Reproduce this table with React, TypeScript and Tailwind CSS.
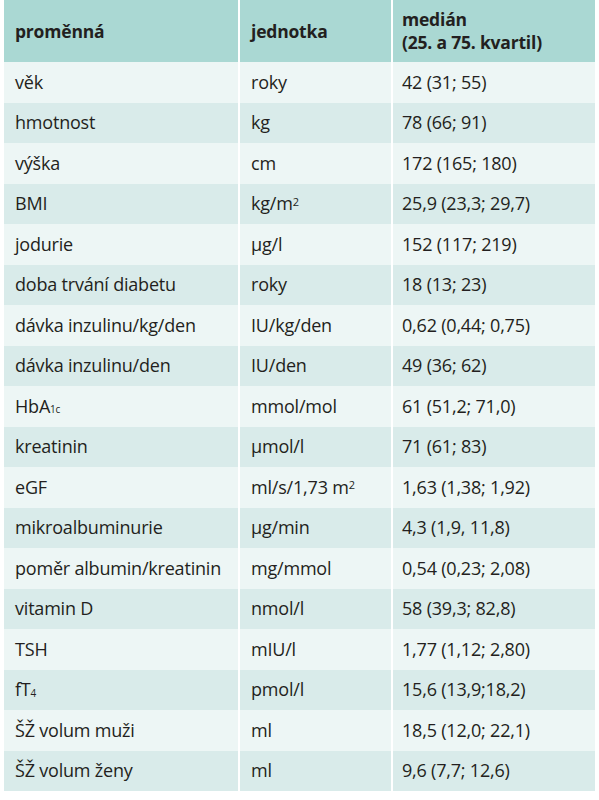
import type { ReactNode } from 'react';

type Row = { name: ReactNode; unit: ReactNode; value: string };

const rows: Row[] = [
  { name: 'věk', unit: 'roky', value: '42 (31; 55)' },
  { name: 'hmotnost', unit: 'kg', value: '78 (66; 91)' },
  { name: 'výška', unit: 'cm', value: '172 (165; 180)' },
  { name: 'BMI', unit: <>kg/m<sup className="text-[11px] relative -top-[2px]">2</sup></>, value: '25,9 (23,3; 29,7)' },
  { name: 'jodurie', unit: 'μg/l', value: '152 (117; 219)' },
  { name: 'doba trvání diabetu', unit: 'roky', value: '18 (13; 23)' },
  { name: 'dávka inzulinu/kg/den', unit: 'IU/kg/den', value: '0,62 (0,44; 0,75)' },
  { name: 'dávka inzulinu/den', unit: 'IU/den', value: '49 (36; 62)' },
  { name: <>HbA<sub className="text-[10px] relative top-[3px]">1c</sub></>, unit: 'mmol/mol', value: '61 (51,2; 71,0)' },
  { name: 'kreatinin', unit: 'μmol/l', value: '71 (61; 83)' },
  { name: 'eGF', unit: <>ml/s/1,73 m<sup className="text-[11px] relative -top-[2px]">2</sup></>, value: '1,63 (1,38; 1,92)' },
  { name: 'mikroalbuminurie', unit: 'μg/min', value: '4,3 (1,9, 11,8)' },
  { name: 'poměr albumin/kreatinin', unit: 'mg/mmol', value: '0,54 (0,23; 2,08)' },
  { name: 'vitamin D', unit: 'nmol/l', value: '58 (39,3; 82,8)' },
  { name: 'TSH', unit: 'mIU/l', value: '1,77 (1,12; 2,80)' },
  { name: <>fT<sub className="text-[10px] relative top-[3px]">4</sub></>, unit: 'pmol/l', value: '15,6 (13,9;18,2)' },
  { name: 'ŠŽ volum muži', unit: 'ml', value: '18,5 (12,0; 22,1)' },
  { name: 'ŠŽ volum ženy', unit: 'ml', value: '9,6 (7,7; 12,6)' },
];

const App = () => {
  return (
    <div className="w-[599px] h-[800px] bg-white pl-[4px] text-[#231f20]" style={{ fontFamily: '"Open Sans", "Noto Sans", sans-serif' }}>
      <div className="w-[591px] flex flex-col">
        <div className="grid grid-cols-[234px_151px_202px] gap-x-[2px] h-[62px] text-[17.5px] font-bold tracking-[-0.2px]">
          <div className="bg-[#aad8d3] flex items-center pl-[11px]">proměnná</div>
          <div className="bg-[#aad8d3] flex items-center pl-[11px]">jednotka</div>
          <div className="bg-[#aad8d3] flex flex-col justify-center pl-[9px] leading-[23px]">
            <span>medián</span>
            <span>(25. a 75. kvartil)</span>
          </div>
        </div>
        {rows.map((row, i) => {
          const bg = i % 2 === 0 ? 'bg-[#edf6f5]' : 'bg-[#d9ebea]';
          return (
            <div key={i} className="grid grid-cols-[234px_151px_202px] gap-x-[2px] h-[40.5px] text-[18px] tracking-[-0.2px]">
              <div className={`${bg} flex items-center pl-[11px]`}>{row.name}</div>
              <div className={`${bg} flex items-center pl-[11px]`}>{row.unit}</div>
              <div className={`${bg} flex items-center pl-[9px]`}>{row.value}</div>
            </div>
          );
        })}
      </div>
    </div>
  );
};

export default App;
